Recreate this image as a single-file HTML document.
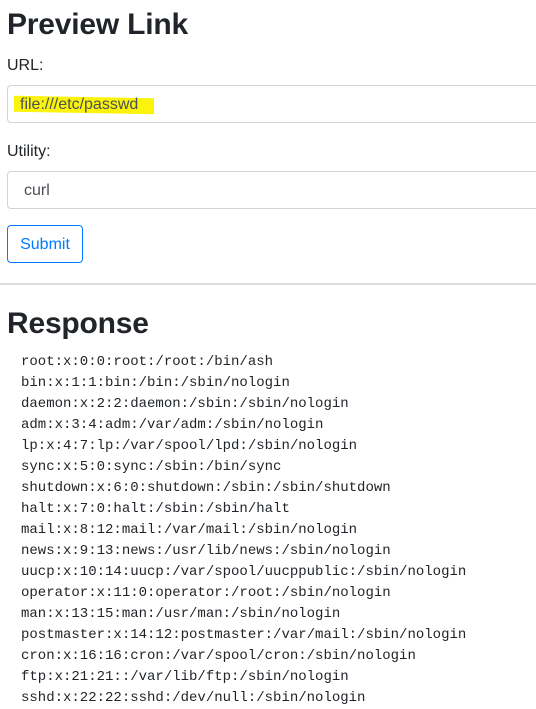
<!DOCTYPE html>
<html><head><meta charset="utf-8"><style>
body{margin:0;background:#fff;font-family:"Liberation Sans",sans-serif;color:#212529;overflow:hidden;width:536px;height:694px;position:relative}
.a{position:absolute;white-space:nowrap}
h1{margin:0;font-weight:bold;font-size:30px;position:absolute;left:7px;letter-spacing:-0.2px}
.lbl{font-size:16px;left:7px;top:0}
.inp{position:absolute;left:7px;width:560px;height:36px;border:1px solid #ced4da;border-radius:4px;box-sizing:content-box}
.inp span{position:absolute;left:16px;top:10px;font-size:16px;color:#495057}
.btn{position:absolute;left:7px;top:225px;width:74px;height:36px;border:1px solid #007bff;border-radius:4px;color:#007bff;font-size:16px;text-align:center;line-height:37px}
hr{position:absolute;top:283px;left:0;width:536px;margin:0;border:0;border-top:2px solid #ddd}
pre{position:absolute;left:21px;top:352px;margin:0;font-family:"Liberation Mono",monospace;font-size:14px;line-height:21px;color:#212529}
</style></head><body>
<h1 style="top:8px">Preview Link</h1>
<div class="a lbl" style="top:57px">URL:</div>
<div class="inp" style="top:85px"><div style="position:absolute;left:6px;top:11px;width:140px;height:16px;background:#fbf30a;transform:skewY(1deg)"></div><span style="left:12px">file:///etc/passwd</span></div>
<div class="a lbl" style="top:143px">Utility:</div>
<div class="inp" style="top:171px"><span>curl</span></div>
<div class="btn">Submit</div>
<hr>
<h1 style="top:307px">Response</h1>
<pre>root:x:0:0:root:/root:/bin/ash
bin:x:1:1:bin:/bin:/sbin/nologin
daemon:x:2:2:daemon:/sbin:/sbin/nologin
adm:x:3:4:adm:/var/adm:/sbin/nologin
lp:x:4:7:lp:/var/spool/lpd:/sbin/nologin
sync:x:5:0:sync:/sbin:/bin/sync
shutdown:x:6:0:shutdown:/sbin:/sbin/shutdown
halt:x:7:0:halt:/sbin:/sbin/halt
mail:x:8:12:mail:/var/mail:/sbin/nologin
news:x:9:13:news:/usr/lib/news:/sbin/nologin
uucp:x:10:14:uucp:/var/spool/uucppublic:/sbin/nologin
operator:x:11:0:operator:/root:/sbin/nologin
man:x:13:15:man:/usr/man:/sbin/nologin
postmaster:x:14:12:postmaster:/var/mail:/sbin/nologin
cron:x:16:16:cron:/var/spool/cron:/sbin/nologin
ftp:x:21:21::/var/lib/ftp:/sbin/nologin
sshd:x:22:22:sshd:/dev/null:/sbin/nologin</pre>
</body></html>
